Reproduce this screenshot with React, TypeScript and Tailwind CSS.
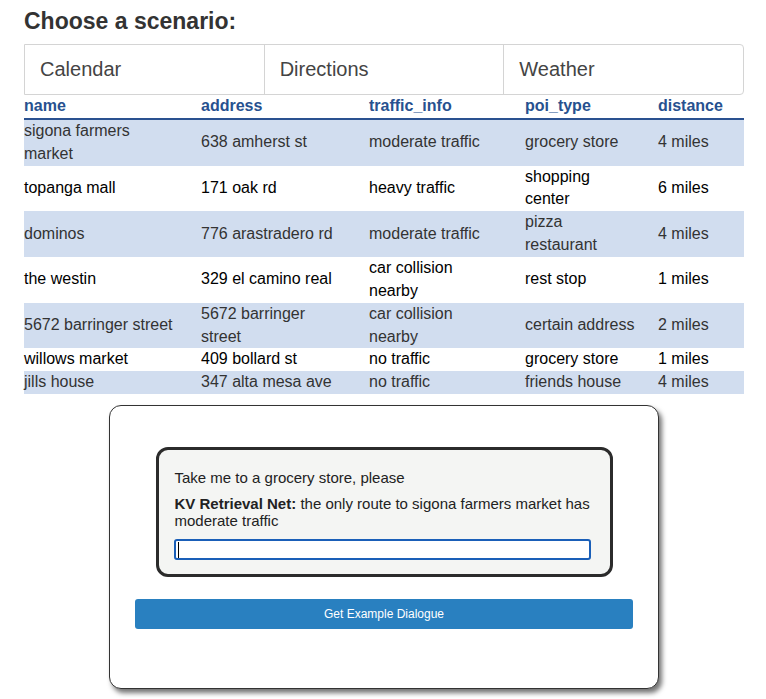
const rows = [
  { name: "sigona farmers market", address: "638 amherst st", traffic: "moderate traffic", poi: "grocery store", distance: "4 miles" },
  { name: "topanga mall", address: "171 oak rd", traffic: "heavy traffic", poi: "shopping center", distance: "6 miles" },
  { name: "dominos", address: "776 arastradero rd", traffic: "moderate traffic", poi: "pizza restaurant", distance: "4 miles" },
  { name: "the westin", address: "329 el camino real", traffic: "car collision nearby", poi: "rest stop", distance: "1 miles" },
  { name: "5672 barringer street", address: "5672 barringer street", traffic: "car collision nearby", poi: "certain address", distance: "2 miles" },
  { name: "willows market", address: "409 bollard st", traffic: "no traffic", poi: "grocery store", distance: "1 miles" },
  { name: "jills house", address: "347 alta mesa ave", traffic: "no traffic", poi: "friends house", distance: "4 miles" },
]

const cols = "grid grid-cols-[177px_168px_156px_133px_86px]"

export default function App() {
  return (
    <div className="min-h-[699px] bg-white pt-[8px] font-['Liberation_Sans',Arial,sans-serif]">
      <div className="ml-[24px] w-[720px]">
        <h1 className="text-[23px] font-bold leading-[27px] text-[#333]">Choose a scenario:</h1>

        {/* scenario tabs */}
        <div className="mt-[9px] flex h-[51px] rounded-r-[4px] border border-[#d4d4d4]">
          {["Calendar", "Directions", "Weather"].map((t, i) => (
            <div
              key={t}
              className={`flex flex-1 items-center pb-[1px] pl-[15px] text-[20px] text-[#444] ${i > 0 ? "border-l border-[#d4d4d4]" : ""}`}
            >
              {t}
            </div>
          ))}
        </div>

        {/* places table */}
        <div className="text-[16px] leading-[22.86px]">
          <div className={`${cols} border-b-2 border-[#2a5190] font-bold text-[#27518f]`}>
            {["name", "address", "traffic_info", "poi_type", "distance"].map((h) => (
              <div key={h} className="pr-[22px]">{h}</div>
            ))}
          </div>
          {rows.map((r, i) => (
            <div
              key={i}
              className={`${cols} items-center ${i % 2 === 0 ? "bg-[#d1ddef] text-[#333]" : "bg-white text-black"}`}
            >
              <div className="pr-[22px]">{r.name}</div>
              <div className="pr-[22px]">{r.address}</div>
              <div className="pr-[22px]">{r.traffic}</div>
              <div className="pr-[22px]">{r.poi}</div>
              <div className="pr-[22px]">{r.distance}</div>
            </div>
          ))}
        </div>
      </div>

      {/* dialogue card */}
      <div className="ml-[109px] mt-[11px] flex h-[284px] w-[550px] flex-col items-center rounded-[12px] border border-[#333] bg-white pt-[41px] shadow-[3px_4px_5px_rgba(0,0,0,0.55)]">
        <div className="w-[457px] rounded-[12px] border-[3px] border-[#2b2b2b] bg-[#f4f5f3] pb-[14px] pl-[15px] pr-[19px] pt-[19px] text-[15px] leading-[17px] text-[#222]">
          <p className="pl-[1px]">Take me to a grocery store, please</p>
          <p className="mt-[9px] pl-[1px]">
            <b>KV Retrieval Net:</b> the only route to sigona farmers market has moderate traffic
          </p>
          <div className="relative mt-[10px] h-[21px] w-[417px] rounded-[3px] border-2 border-[#1a5fb8] bg-white">
            <span className="absolute left-[2px] top-[1px] h-[16px] w-px bg-black" />
          </div>
        </div>

        <button className="mt-[22px] h-[30px] w-[498px] rounded-[3px] bg-[#2980c0] text-[12px] text-white">
          Get Example Dialogue
        </button>
      </div>
    </div>
  )
}
